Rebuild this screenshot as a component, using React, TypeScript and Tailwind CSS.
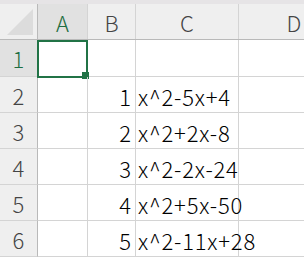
import React from "react";

const rows: { n: number; b: string; c: string }[] = [
  { n: 1, b: "", c: "" },
  { n: 2, b: "1", c: "x^2-5x+4" },
  { n: 3, b: "2", c: "x^2+2x-8" },
  { n: 4, b: "3", c: "x^2-2x-24" },
  { n: 5, b: "4", c: "x^2+5x-50" },
  { n: 6, b: "5", c: "x^2-11x+28" },
];

const cols = "grid grid-cols-[38px_50px_48px_103px_1fr]";
const font = { fontFamily: '"Noto Sans CJK JP", "Noto Sans", sans-serif' };

export default function App() {
  return (
    <div className="w-[304px] h-[257px] overflow-hidden bg-white text-[22px] font-light leading-none" style={font}>
      <div className="h-[4px] bg-[#e6e4e6]" />

      {/* column headers */}
      <div className={`${cols} h-[36px] bg-[#efefef] border-b border-[#b9b9b9]`}>
        <div className="relative border-r border-[#b9b9b9] overflow-hidden">
          <div className="absolute right-[4px] bottom-[4px] w-0 h-0 border-l-[26px] border-l-transparent border-b-[26px] border-b-[#dcdcdc]" />
        </div>
        <div className="flex items-center justify-center bg-[#e1e1e1] text-[#1e6e42] border-r border-[#d4d4d4]">A</div>
        <div className="flex items-center justify-center text-[#444] border-r border-[#d4d4d4]">B</div>
        <div className="flex items-center justify-center text-[#444] border-r border-[#d4d4d4]">C</div>
        <div className="flex items-center justify-center text-[#444] pl-[45px]">D</div>
      </div>

      {rows.map((r) => (
        <div key={r.n} className={`${cols} ${r.n === 1 ? "h-[37px]" : "h-[36px]"}`}>
          <div
            className={`flex items-center justify-center border-r border-[#b9b9b9] border-b border-b-[#d4d4d4] ${
              r.n === 1 ? "bg-[#e1e1e1] text-[#1e6e42]" : "bg-[#efefef] text-[#444]"
            }`}
          >
            {r.n}
          </div>
          <div className="relative border-r border-b border-[#d4d4d4]">
            {r.n === 1 && (
              <>
                <div className="absolute -left-[1px] top-0 w-[51px] h-[38px] border-2 border-[#217346]" />
                <div className="absolute left-[44px] top-[32px] w-[7px] h-[7px] bg-[#217346]" />
              </>
            )}
          </div>
          <div className="flex items-center justify-end pr-[4px] pt-[3px] border-r border-b border-[#d4d4d4] text-black">
            {r.b}
          </div>
          <div className="flex items-center pl-[2px] pt-[3px] border-r border-b border-[#d4d4d4] text-black whitespace-nowrap tracking-[0.8px]">
            {r.c}
          </div>
          <div className="border-b border-[#d4d4d4]" />
        </div>
      ))}
    </div>
  );
}
